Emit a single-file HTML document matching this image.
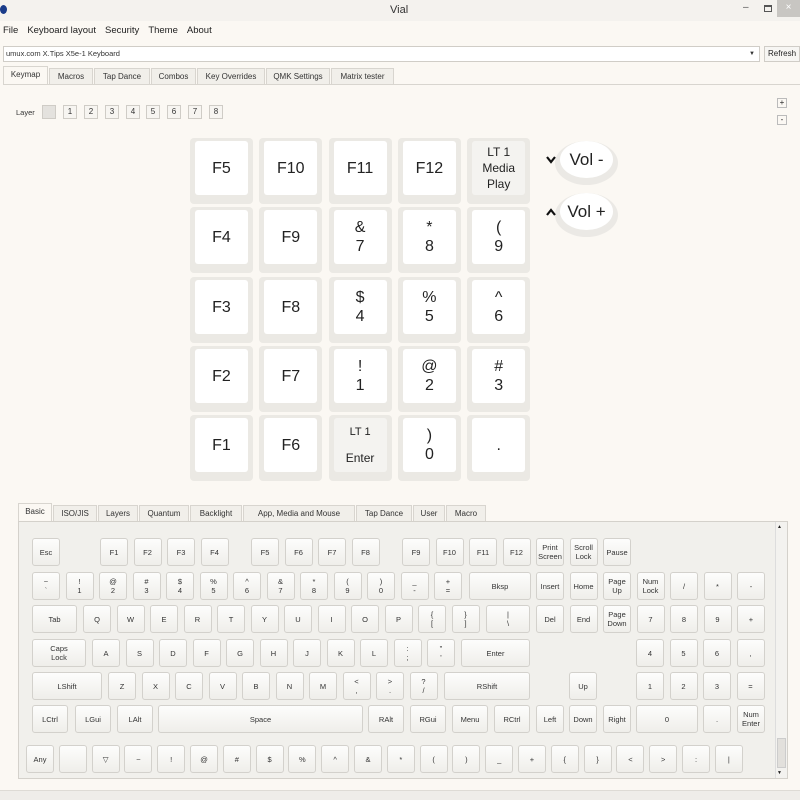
<!DOCTYPE html>
<html><head><meta charset="utf-8"><style>
*{box-sizing:border-box;margin:0;padding:0}
body{width:800px;height:800px;overflow:hidden;background:#fbf8f3;font-family:"Liberation Sans",sans-serif;position:relative;color:#222}
.a{position:absolute}
.tb{left:0;top:0;width:800px;height:21px;background:#f4f2ee}
.menu span{margin-right:9px}
.tab{position:absolute;height:16px;border:1px solid #d8d5cf;border-bottom:none;background:#f1efea;font-size:8px;color:#333;text-align:center;line-height:15px}
.tab.on{background:#fbf8f3;height:18px;top:-2px}
.lb{position:absolute;top:105px;width:14px;height:14px;border:1px solid #cfccc6;background:#f7f5f1;font-size:8px;text-align:center;line-height:12px;color:#333}
.bk{position:absolute;width:63px;height:66px;background:#ebe9e4;border-radius:4px}
.bk .in{position:absolute;left:5px;top:3px;width:53px;height:54px;background:#fff;border-radius:3px;display:flex;flex-direction:column;align-items:center;justify-content:center;font-size:16px;line-height:19px;color:#222;text-align:center}
.k{position:absolute;height:28px;border:1px solid #d3d1cc;border-radius:3px;background:linear-gradient(#fdfdfc,#efeeea);font-size:7.5px;line-height:9px;color:#333;display:flex;flex-direction:column;align-items:center;justify-content:center;text-align:center}
</style></head><body>
<div class="a tb"></div>
<div class="a" style="left:0;top:5px;width:7px;height:9px;border-radius:50%;background:#1a3c8a"></div>
<div class="a" style="left:390px;top:4px;font-size:11px;color:#333">Vial</div>
<div class="a" style="left:743px;top:2px;font-size:10px;color:#555">–</div>
<div class="a" style="left:764px;top:5px;width:8px;height:7px;border:1px solid #555;border-top-width:2px"></div>
<div class="a" style="left:777px;top:0;width:23px;height:17px;background:#c8c6c2;color:#fff;font-size:10px;text-align:center;line-height:16px">×</div>
<div class="a menu" style="left:3px;top:25px;font-size:9.5px;color:#222"><span>File</span><span>Keyboard layout</span><span>Security</span><span>Theme</span><span>About</span></div>
<div class="a" style="left:3px;top:46px;width:757px;height:16px;border:1px solid #d0cdc7;background:#fff;font-size:7.5px;line-height:14px;padding-left:2px;color:#333">umux.com X.Tips X5e-1 Keyboard<span style="position:absolute;right:4px;font-size:6px">▼</span></div>
<div class="a" style="left:764px;top:46px;width:36px;height:16px;border:1px solid #d0cdc7;background:#f7f6f3;font-size:8px;line-height:14px;padding-left:3px">Refresh</div>
<div class="a" style="left:3px;top:68px;width:797px;height:18px">
<div class="tab on" style="left:0;width:45px">Keymap</div>
<div class="tab" style="left:46px;width:44px">Macros</div>
<div class="tab" style="left:91px;width:56px">Tap Dance</div>
<div class="tab" style="left:148px;width:45px">Combos</div>
<div class="tab" style="left:194px;width:68px">Key Overrides</div>
<div class="tab" style="left:263px;width:64px">QMK Settings</div>
<div class="tab" style="left:328px;width:63px">Matrix tester</div>
</div>
<div class="a" style="left:3px;top:84px;width:797px;height:1px;background:#d8d5cf"></div>
<div class="a" style="left:16px;top:108px;font-size:7.5px;color:#333">Layer</div>
<div class="lb" style="left:42px;background:#e4e2de"></div>
<div class="lb" style="left:63px">1</div><div class="lb" style="left:84px">2</div><div class="lb" style="left:105px">3</div><div class="lb" style="left:126px">4</div><div class="lb" style="left:146px">5</div><div class="lb" style="left:167px">6</div><div class="lb" style="left:188px">7</div><div class="lb" style="left:209px">8</div>
<div class="a" style="left:777px;top:98px;width:10px;height:10px;border:1px solid #bbb;font-size:8px;line-height:8px;text-align:center">+</div>
<div class="a" style="left:777px;top:115px;width:10px;height:10px;border:1px solid #bbb;font-size:8px;line-height:8px;text-align:center">-</div>
<div id="big"></div>
<div class="a" style="left:555px;top:141px;width:63px;height:44px;border-radius:50%;background:#ebe9e5"></div>
<div class="a" style="left:560px;top:141px;width:53px;height:37px;border-radius:50%;background:#fff;font-size:17px;line-height:37px;text-align:center">Vol -</div>
<svg class="a" style="left:546px;top:156px" width="10" height="8"><path d="M1 1 L5 6 L9 1" stroke="#111" stroke-width="2.2" fill="none"/></svg>
<div class="a" style="left:555px;top:193px;width:63px;height:44px;border-radius:50%;background:#ebe9e5"></div>
<div class="a" style="left:560px;top:193px;width:53px;height:37px;border-radius:50%;background:#fff;font-size:17px;line-height:37px;text-align:center">Vol +</div>
<svg class="a" style="left:546px;top:208px" width="10" height="8"><path d="M1 7 L5 2 L9 7" stroke="#111" stroke-width="2.2" fill="none"/></svg>
<div class="a" style="left:18px;top:505px;width:770px;height:18px">
<div class="tab on" style="left:0;width:34px">Basic</div>
<div class="tab" style="left:35px;width:44px">ISO/JIS</div>
<div class="tab" style="left:80px;width:40px">Layers</div>
<div class="tab" style="left:121px;width:50px">Quantum</div>
<div class="tab" style="left:172px;width:52px">Backlight</div>
<div class="tab" style="left:225px;width:112px">App, Media and Mouse</div>
<div class="tab" style="left:338px;width:56px">Tap Dance</div>
<div class="tab" style="left:395px;width:32px">User</div>
<div class="tab" style="left:428px;width:40px">Macro</div>
</div>
<div class="a" style="left:18px;top:521px;width:770px;height:258px;border:1px solid #d4d1cb;background:#f1f0ec"></div>
<div class="a" style="left:775px;top:522px;width:12px;height:256px;background:#f3f2ef;border-left:1px solid #ddd"></div>
<div class="a" style="left:777px;top:738px;width:9px;height:30px;background:#e2e0dc;border:1px solid #ccc"></div>
<div class="a" style="left:777px;top:524px;font-size:5px">▲</div>
<div class="a" style="left:777px;top:770px;font-size:5px">▼</div>
<div id="kb"></div>
<div class="a" style="left:0;top:790px;width:800px;height:10px;background:#efede9;border-top:1px solid #dedbd5"></div>
<script>
var big=[["F5","F10","F11","F12","LT 1\nMedia\nPlay"],["F4","F9","&\n7","*\n8","(\n9"],["F3","F8","$\n4","%\n5","^\n6"],["F2","F7","!\n1","@\n2","#\n3"],["F1","F6","LT1E",")\n0","."]];
var h="";var ys=[138,207,277,346,415];
big.forEach(function(r,i){r.forEach(function(t,j){var x=190+j*69.3;var c;
if(t=="LT1E")c='<div class="in" style="background:#f4f3f0;justify-content:flex-start;padding-top:5px"><span style="font-size:11px">LT 1</span><span style="font-size:12px;margin-top:7px">Enter</span></div>';
else if(t.indexOf("Media")>=0)c='<div class="in" style="background:#f4f3f0;font-size:12px;line-height:16px">LT 1<br>Media<br>Play</div>';
else c='<div class="in">'+t.split("\n").join("<br>")+'</div>';
h+='<div class="bk" style="left:'+x+'px;top:'+ys[i]+'px">'+c+'</div>';});});
document.getElementById("big").innerHTML=h;
var u=33.5,w=28;
function K(x,y,t,wd){return '<div class="k" style="left:'+x+'px;top:'+y+'px;width:'+(wd||w)+'px">'+t.split("\n").join("<br>")+'</div>';}
var s="";
var r1=538;s+=K(32,r1,"Esc");
["F1","F2","F3","F4"].forEach(function(t,i){s+=K(100+i*u,r1,t)});
["F5","F6","F7","F8"].forEach(function(t,i){s+=K(251+i*u,r1,t)});
["F9","F10","F11","F12","Print\nScreen","Scroll\nLock","Pause"].forEach(function(t,i){s+=K(402+i*u,r1,t)});
var r2=572;["~\n`","!\n1","@\n2","#\n3","$\n4","%\n5","^\n6","&amp;\n7","*\n8","(\n9",")\n0","_\n-","+\n="].forEach(function(t,i){s+=K(32+i*u,r2,t)});
s+=K(469,r2,"Bksp",62);
["Insert","Home","Page\nUp","Num\nLock","/","*","-"].forEach(function(t,i){s+=K(536+i*u,r2,t)});
var r3=605;s+=K(32,r3,"Tab",45);
["Q","W","E","R","T","Y","U","I","O","P","{\n[","}\n]"].forEach(function(t,i){s+=K(83+i*u,r3,t)});
s+=K(486,r3,"|\n\\",44);
["Del","End","Page\nDown","7","8","9","+"].forEach(function(t,i){s+=K(536+i*u,r3,t)});
var r4=639;s+=K(32,r4,"Caps\nLock",54);
["A","S","D","F","G","H","J","K","L",":\n;","\"\n'"].forEach(function(t,i){s+=K(92+i*u,r4,t)});
s+=K(461,r4,"Enter",69);
["4","5","6",","].forEach(function(t,i){s+=K(636+i*u,r4,t)});
var r5=672;s+=K(32,r5,"LShift",70);
["Z","X","C","V","B","N","M","&lt;\n,","&gt;\n.","?\n/"].forEach(function(t,i){s+=K(108+i*u,r5,t)});
s+=K(444,r5,"RShift",86);s+=K(569,r5,"Up");
["1","2","3","="].forEach(function(t,i){s+=K(636+i*u,r5,t)});
var r6=705;s+=K(32,r6,"LCtrl",36);s+=K(75,r6,"LGui",36);s+=K(117,r6,"LAlt",36);s+=K(158,r6,"Space",205);
s+=K(368,r6,"RAlt",36);s+=K(410,r6,"RGui",36);s+=K(452,r6,"Menu",36);s+=K(494,r6,"RCtrl",36);
s+=K(536,r6,"Left");s+=K(569,r6,"Down");s+=K(603,r6,"Right");s+=K(636,r6,"0",62);s+=K(703,r6,".");s+=K(737,r6,"Num\nEnter");
var r7=745;["Any","","▽","~","!","@","#","$","%","^","&amp;","*","(",")","_","+","{","}","&lt;","&gt;",":","|"].forEach(function(t,i){s+=K(26+i*32.8,r7,t)});
document.getElementById("kb").innerHTML=s;
</script>
</body></html>
